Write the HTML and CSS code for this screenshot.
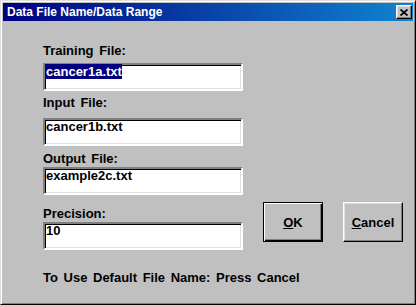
FILE: index.html
```html
<!DOCTYPE html>
<html lang="en">
<head>
  <meta charset="UTF-8" />
  <title>Data File Name/Data Range</title>
  <link rel="stylesheet" href="styles.css">
</head>
<body>
  <div class="window">
    <div class="title-bar">
      <span class="title">Data File Name/Data Range</span>
      <button class="close-button" aria-label="Close">
        <svg width="8" height="7" viewBox="0 0 8 7">
          <path d="M0.5 0.5 L7.5 6.5 M7.5 0.5 L0.5 6.5" stroke="#000" stroke-width="1.7" fill="none" />
        </svg>
      </button>
    </div>

    <div class="content">
      <div class="main">
        <div class="fields">
          <div class="label first">Training File:</div>
          <div class="textbox tb-1"><span class="selected">cancer1a.txt</span></div>

          <div class="label l-2">Input File:</div>
          <div class="textbox tb-2">cancer1b.txt</div>

          <div class="label l-3">Output File:</div>
          <div class="textbox tb-3">example2c.txt</div>

          <div class="label l-4">Precision:</div>
          <div class="textbox tb-3">10</div>
        </div>

        <div class="buttons">
          <button class="btn default"><u>O</u>K</button>
          <button class="btn"><u>C</u>ancel</button>
        </div>
      </div>

      <div class="note">To Use Default File Name: Press Cancel</div>
    </div>
  </div>
</body>
</html>
```

FILE: styles.css
```css
body {
  margin: 0;
  padding: 0;
  background: #c0c0c0;
  font-family: 'Liberation Sans', Arial, sans-serif;
  font-weight: bold;
  font-size: 13px;
  word-spacing: 2px;
}

.window {
  box-sizing: border-box;
  width: 416px;
  height: 305px;
  background: #c0c0c0;
  border: 1px solid;
  border-color: #dfdfdf #000 #000 #dfdfdf;
  box-shadow: inset 1px 1px #fff, inset -1px -1px #808080;
  padding: 2px;
}

.title-bar {
  height: 18px;
  background: linear-gradient(90deg, #000080, #1084d0);
  display: flex;
  align-items: center;
  justify-content: space-between;
  padding: 0 1px 0 4px;
}

.title {
  color: #fff;
  font-size: 12px;
  line-height: 18px;
  word-spacing: 0;
}

.close-button {
  box-sizing: border-box;
  width: 16px;
  height: 14px;
  padding: 0;
  background: #c0c0c0;
  border: 1px solid;
  border-color: #fff #000 #000 #fff;
  box-shadow: inset -1px -1px #808080, inset 1px 1px #dfdfdf;
  display: flex;
  align-items: center;
  justify-content: center;
}

.content {
  padding-left: 40px;
}

.main {
  display: flex;
}

.fields {
  display: flex;
  flex-direction: column;
  width: 200px;
}

.label {
  line-height: 15px;
  color: #000;
}

.label.first { margin-top: 22px; }
.label.l-2 { margin-top: 4px; }
.label.l-3 { margin-top: 5px; }
.label.l-4 { margin-top: 11px; }

.textbox {
  box-sizing: border-box;
  width: 200px;
  height: 28px;
  background: #fff;
  border: 2px solid;
  border-color: #808080 #fff #fff #808080;
  box-shadow: inset 1px 1px #000, inset -1px -1px #dfdfdf;
  line-height: 14px;
  padding: 0 1px;
  color: #000;
}

.tb-1 { margin-top: 5px; }
.tb-2 { margin-top: 8px; }
.tb-3 { margin-top: 1px; }

.selected {
  background: #000080;
  color: #fff;
  margin-left: -1px;
  padding-left: 1px;
}

.buttons {
  display: flex;
  gap: 20px;
  margin-left: 20px;
  margin-top: 181px;
  align-self: flex-start;
}

.btn {
  box-sizing: border-box;
  width: 60px;
  height: 40px;
  padding: 0;
  background: #c0c0c0;
  border: 1px solid;
  border-color: #fff #000 #000 #fff;
  box-shadow: inset -1px -1px #808080, inset 1px 1px #dfdfdf;
  font-family: 'Liberation Sans', Arial, sans-serif;
  font-weight: bold;
  font-size: 13px;
  color: #000;
}

.btn.default {
  border-color: #000;
  box-shadow: inset 1px 1px #fff, inset -1px -1px #000, inset -2px -2px #808080;
}

.note {
  margin-top: 20px;
  line-height: 15px;
}
```
